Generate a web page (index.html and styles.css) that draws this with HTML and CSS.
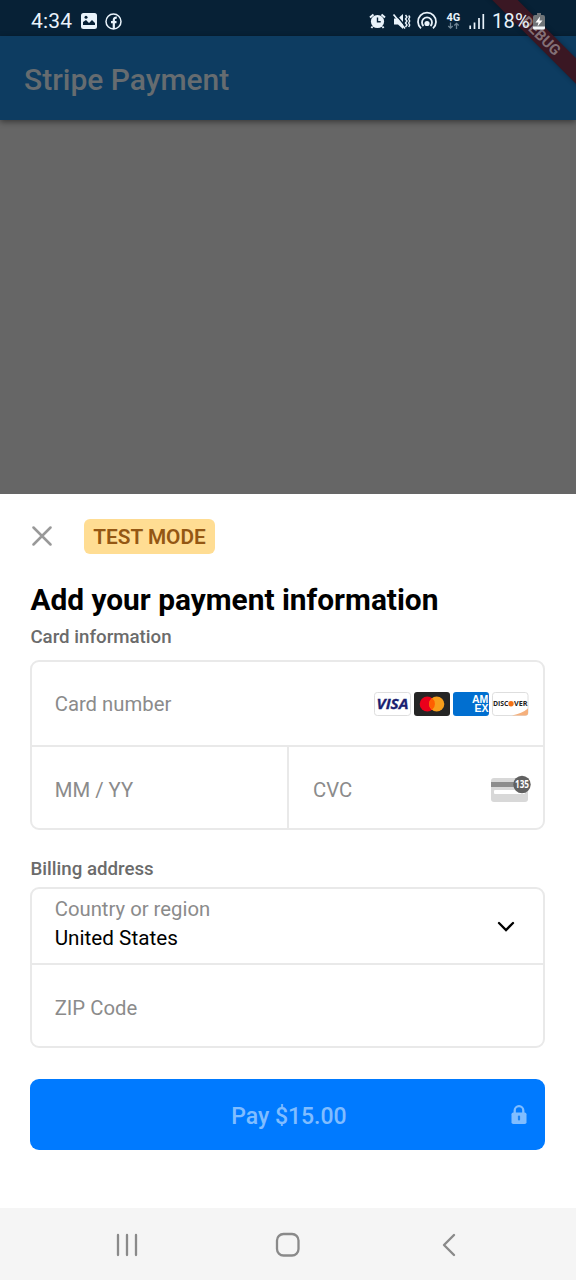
FILE: index.html
```html
<!DOCTYPE html>
<html lang="en">
<head>
<meta charset="utf-8">
<title>Stripe Payment</title>
<link rel="stylesheet" href="styles.css">
</head>
<body>
<div class="phone">
  <header class="status">
    <span class="clock">4:34</span>
    <svg class="photo" width="16" height="16" viewBox="0 0 16 16"><rect width="16" height="16" rx="2.5" fill="#e9f3fb"/><path d="M2 12V9l3-2 3 3 3-3 3 3v2z" fill="#072136"/><circle cx="5" cy="4.3" r="1.5" fill="#072136"/></svg>
    <svg class="facebook" width="17" height="17" viewBox="0 0 17 17" fill="none" stroke="#e9f3fb"><circle cx="8.5" cy="8.5" r="7.5" stroke-width="1.5"/><path d="M8.8 16V7q0-2.5 3-2.3M6 9.2h5.5" stroke-width="2.2"/></svg>
    <svg class="signals" width="118" height="20" viewBox="0 0 118 20" fill="none" stroke="#e9f3fb">
      <circle cx="8.5" cy="10.500" r="6.600" fill="#e9f3fb" stroke="none"/><path d="M1 6.5 4.5 3.4M16 6.5l-3.500-3.100M3.600 15.500l-1.200 1.500M13.400 15.500l1.200 1.500" stroke-width="2"/><path d="M8.500 6.500v4.300h3.200" stroke="#072136" stroke-width="1.400"/>
      <path d="M25 7.500h4l5-4.500v15l-5-4.500h-4z" fill="#e9f3fb" stroke="none"/><path d="M26 2.500 37 16" stroke="#072136" stroke-width="1.500"/><path d="M24.500 3.500 36 17.500" stroke-width="1.700"/><path d="M36.500 4l1.500 2-1.500 2 1.500 2-1.500 2 1.500 2-1.500 2M39.700 4.500l1 1.500-1 2 1 2-1 2 1 2-1 2" stroke-width="1.400"/>
      <circle cx="58" cy="12.500" r="2.600" fill="#e9f3fb" stroke="none"/><path d="M52 17.300a9 9 0 1 1 12 0M54.500 15a5 5 0 1 1 7 0" stroke-width="1.800"/>
      <path d="M81.500 11.500v6M79.300 15l2.200 2.200 2.200-2.200M87.500 18v-6M85.300 14.500l2.200-2.200 2.200 2.200" stroke="#6f8494" stroke-width="1.300"/>
      <text class="network" x="77.500" y="9.500">4G</text>
      <path d="M101.200 18v-3.500M105.500 18V11.500M110 18V7M114.300 18V3" stroke-width="1.700"/>
    </svg>
    <span class="percent">18%</span>
    <svg class="battery" width="12" height="17" viewBox="0 0 12 17"><path d="M4 0h4v2h2q2 0 2 2v11q0 1.500-1.500 1.500h-9Q0 16.500 0 15V4q0-2 2-2h2z" fill="#6f7478"/><path d="M0 13.500h12V15q0 1.500-1.500 1.500h-9Q0 16.500 0 15z" fill="#f4f8fb"/><path d="M7 3.500 2.500 9.500h3l-1 4 5-6H6.500z" fill="#fff"/></svg>
  </header>
  <div class="appbar"><h1>Stripe Payment</h1></div>
  <div class="debug"><span>DEBUG</span></div>
  <div class="scrim"></div>
  <main class="sheet">
    <div class="top">
      <svg width="20" height="20" viewBox="0 0 20 20"><path d="M1.500 1.500 18.500 18.500M18.500 1.500 1.500 18.500" stroke="#999" stroke-width="2.500" stroke-linecap="round"/></svg>
      <span class="mode">TEST MODE</span>
    </div>
    <h2>Add your payment information</h2>
    <h3 class="card-label">Card information</h3>
    <section class="box">
      <div class="row number">
        <span class="hint">Card number</span>
        <svg width="156" height="24" viewBox="0 0 156 24">
          <rect x=".5" y=".5" width="36" height="23" rx="2.800" fill="#fff" stroke="#dedede"/>
          <text class="visa" x="2.500" y="17.300" textLength="32" lengthAdjust="spacingAndGlyphs">VISA</text>
          <rect x="40" width="36" height="24" rx="3" fill="#252525"/><circle cx="53.300" cy="12" r="7.600" fill="#eb001b"/><circle cx="62.700" cy="12" r="7.600" fill="#f79e1b"/><path d="M58 6a7.600 7.600 0 0 1 0 12 7.600 7.600 0 0 1 0-12" fill="#ff5f00"/>
          <rect x="79" width="36" height="24" rx="3" fill="#016fd0"/>
          <text class="amex"><tspan x="98" y="11.300">AM</tspan><tspan x="100.500" y="20">EX</tspan></text>
          <rect x="118.500" y=".5" width="35.500" height="23" rx="2.800" fill="#fff" stroke="#dedede"/>
          <path d="M138 23.500q10-2 16-7V21q0 2.500-2.500 2.500z" fill="#f5b07c"/>
          <text class="discover" x="119" y="14.300" textLength="15.500" lengthAdjust="spacingAndGlyphs">DISC</text><circle cx="137" cy="11.700" r="2.700" fill="#f47216"/><text class="discover" x="140" y="14.300" textLength="13.500" lengthAdjust="spacingAndGlyphs">VER</text>
        </svg>
      </div>
      <div class="split">
        <div class="row"><span class="hint">MM / YY</span></div>
        <div class="row cvc"><span class="hint">CVC</span>
          <svg width="42" height="28" viewBox="0 0 42 28"><rect x="1" y="3" width="37" height="24" rx="3" fill="#d8d8d8"/><path d="M1 7h37v5H1z" fill="#8d8d8d"/><rect x="4" y="15" width="31" height="4" rx="1" fill="#fff"/><circle cx="32" cy="9.500" r="8.700" fill="#616161"/><text class="digits" x="25" y="13" textLength="14" lengthAdjust="spacingAndGlyphs">135</text></svg>
        </div>
      </div>
    </section>
    <h3 class="billing-label">Billing address</h3>
    <section class="box">
      <div class="country">
        <div><div class="hint">Country or region</div><div class="value">United States</div></div>
        <svg width="20" height="14" viewBox="0 0 20 14"><path d="m3 3 7 7 7-7" fill="none" stroke="#000" stroke-width="2.300" stroke-linecap="round"/></svg>
      </div>
      <div class="row zip"><span class="hint">ZIP Code</span></div>
    </section>
    <button class="pay">
      <span>Pay $15.00</span>
      <svg width="16" height="20" viewBox="0 0 16 20"><path d="M3.700 8V5.500a4.300 4.300 0 0 1 8.600 0V8" fill="none" stroke="#80bdff" stroke-width="2.300"/><rect x=".5" y="7.500" width="15" height="11.500" rx="1.800" fill="#80bdff"/><path d="M8 11.500v3" stroke="#1a83f5" stroke-width="2.200" stroke-linecap="round"/></svg>
    </button>
  </main>
  <nav class="nav">
    <svg width="22" height="24" viewBox="0 0 22 24"><path d="M2 2v20M11 2v20M20 2v20" stroke="#8a8a8a" stroke-width="2.300" stroke-linecap="round"/></svg>
    <svg width="26" height="26" viewBox="0 0 26 26"><rect x="2" y="2" width="21.500" height="21.500" rx="6.500" fill="none" stroke="#8a8a8a" stroke-width="2.300"/></svg>
    <svg width="16" height="24" viewBox="0 0 16 24"><path d="M13 2 3 12l10 10" fill="none" stroke="#8a8a8a" stroke-width="2.400" stroke-linecap="round" stroke-linejoin="round"/></svg>
  </nav>
</div>
</body>
</html>
```
FILE: styles.css
```css
* { box-sizing: border-box; }
body { margin: 0; font-family: Roboto, "Liberation Sans", sans-serif; }
svg { display: block; flex: none; }
h1, h2, h3 { margin: 0; }
.phone { position: relative; width: 576px; height: 1280px; display: flex; flex-direction: column; overflow: hidden; background: #666; }
.status { height: 36px; background: #072136; color: #e9f3fb; display: flex; align-items: center; padding: 6px 30px 0 31px; font-size: 21px; line-height: 30px; flex: none; }
.status > * { z-index: 2; }
.clock { width: 50px; letter-spacing: .2px; }
.facebook { margin-left: 8px; }
.signals { margin-left: auto; }
.percent { width: 39px; margin-left: 5px; font-size: 20px; letter-spacing: .2px; white-space: nowrap; }
.battery { margin-left: 2px; margin-right: 1px; }
.network { font: 700 11px Roboto, sans-serif; fill: #e9f3fb; stroke: none; }
.appbar { height: 84px; background: #0d3c61; display: flex; align-items: center; padding: 4px 24px 0; flex: none; box-shadow: 0 2px 6px rgba(0,0,0,.45); z-index: 1; }
.appbar h1 { font-size: 30px; font-weight: 500; line-height: 36px; color: #666c70; }
.debug { position: absolute; z-index: 1; left: 470.500px; top: 26.500px; width: 140px; height: 18px; background: #3a1723; color: #837076; transform: rotate(45deg); display: flex; align-items: center; justify-content: center; font-size: 15px; font-weight: 700; box-shadow: 0 0 5px rgba(0,0,0,.3); }
.scrim { height: 374px; flex: none; }
.sheet { height: 714px; flex: none; background: #fff; padding: 24px 31px 0 30.400px; }
.top { display: flex; align-items: center; height: 36px; padding-left: 1.600px; gap: 32px; }
.mode { width: 131px; height: 35px; border-radius: 6px; background: #ffdd93; color: #945713; font-size: 20.800px; font-weight: 600; line-height: 37px; text-align: center; }
h2 { margin-top: 26px; font-size: 29.850px; line-height: 40px; font-weight: 700; color: #000; white-space: nowrap; }
h3 { font-size: 18.700px; font-weight: 500; line-height: 24px; color: #6b6b6b; }
.card-label { margin-top: 5px; }
.box { border: 2px solid #e9e9e9; border-radius: 9px; }
.card-label + .box { margin-top: 11px; height: 170px; }
.row { display: flex; align-items: center; padding: 2px 13.500px 0 22.300px; }
.row svg { margin-left: auto; }
.number { height: 83px; padding-top: 1px; }
.split { display: grid; grid-template-columns: 255px 1fr; height: 84px; border-top: 2px solid #e9e9e9; }
.split .row { padding-top: 4px; }
.split .cvc { border-left: 2px solid #e9e9e9; padding-right: 11.500px; padding-left: 23.600px; }
.cvc svg { margin-top: -2px; }
.hint { font-size: 20.300px; line-height: 26px; color: #8b8b8b; }
.billing-label { margin-top: 27px; }
.billing-label + .box { margin-top: 6px; height: 161px; }
.country { display: flex; justify-content: space-between; height: 74px; padding: 7px 27px 0 22.300px; }
.country svg { margin-top: 24px; }
.value { font-size: 20.700px; line-height: 26px; color: #000; margin-top: 3px; }
.zip { height: 84px; border-top: 2px solid #e9e9e9; padding-top: 4px; }
.pay { display: grid; grid-template-columns: 1fr auto 1fr; align-items: center; width: 515px; height: 71px; margin-top: 31px; border: 0; border-radius: 9px; background: #007aff; color: #80bdff; font: 500 23px Roboto, sans-serif; padding: 3px 18px 0; }
.pay span { grid-column: 2; padding-left: 2px; }
.pay svg { justify-self: end; margin-top: -3px; }
.visa { font: italic 700 14.500px "Open Sans", sans-serif; fill: #1a1f71; stroke: #1a1f71; stroke-width: .3px; }
.amex { font: 700 10.500px "Liberation Sans", sans-serif; fill: #fff; }
.discover { font: 700 7px "Open Sans", sans-serif; fill: #222; }
.digits { font: 700 10px "Open Sans", sans-serif; fill: #fff; }
.nav { height: 72px; flex: none; background: #f5f5f5; display: grid; grid-template-columns: 159px 166px 1fr; align-items: center; padding: 2px 0 0 116px; }
```
